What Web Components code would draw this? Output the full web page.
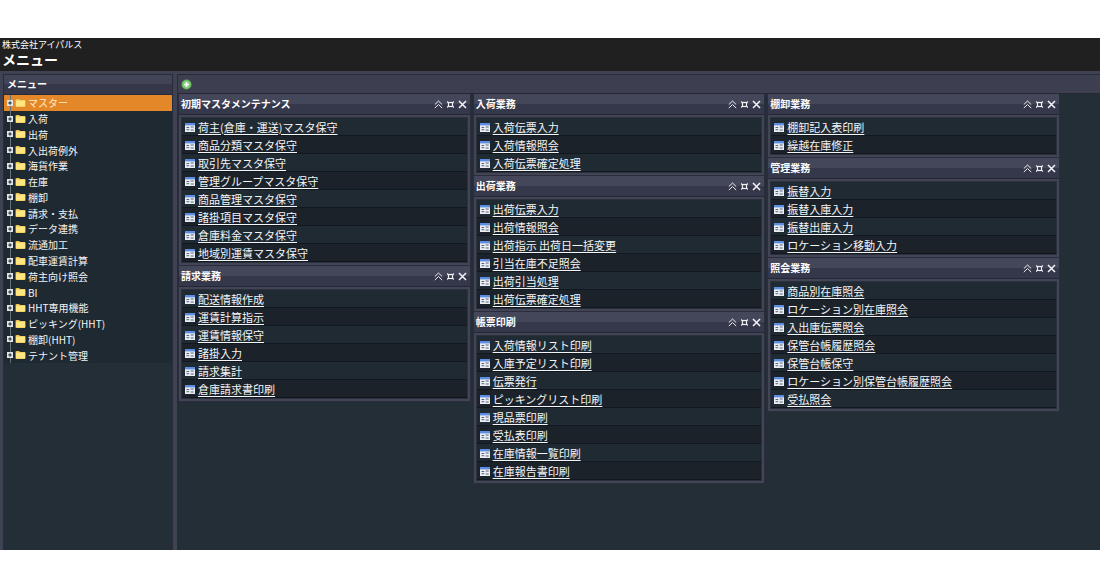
<!DOCTYPE html>
<html lang="ja">
<head>
<meta charset="utf-8">
<meta name="viewport" content="width=device-width, initial-scale=1">
<title>メニュー</title>
<style>
  html, body { height: 100%; margin: 0; }
  body {
    box-sizing: border-box;
    padding: 38px 0 36px;
    background: #fff;
    color: #fff;
    font: 11px/18px "Noto Sans CJK JP", sans-serif;
  }
</style>
</head>
<body>
<wms-app></wms-app>
<script>
const base = `*, *::before, *::after { box-sizing: border-box; }
  :host { box-sizing: border-box; }
  button { background: none; border: 0; padding: 0; margin: 0; color: inherit; font: inherit; cursor: pointer; }
  svg { display: block; }
  ul { list-style: none; margin: 0; padding: 0; }
  h1, h2, p { margin: 0; }`;

class BaseElement extends HTMLElement {
  render(css, html) {
    this.attachShadow({ mode: 'open' }).innerHTML = `<style>${base}${css}</style>${html}`;
  }
}

customElements.define('app-banner', class extends BaseElement {
  connectedCallback() {
    this.render(`
      :host { display: block; height: 33px; padding: 1px 2px; background: #202020; flex: none; }
      p { font-size: 9px; line-height: 12px; }
      h1 { font-size: 14px; line-height: 16px; font-weight: 700; }`,
      `<p>${this.getAttribute('company')}</p><h1><slot></slot></h1>`);
  }
});

customElements.define('tree-item', class extends BaseElement {
  connectedCallback() {
    this.render(`
      :host { display: block; min-height: 0; }
      .row { display: flex; align-items: center; height: 100%; padding-left: 3px; color: #f4f5f6; }
      :host([selected]) .row { background: #e48728; color: #ffeccb; }
      .label { flex: 1; text-align: left; font-size: 10px; line-height: 15px; padding-left: 2px; white-space: nowrap; }
      .toggle { flex: none; align-self: stretch; display: flex; align-items: center; width: 6px;
        background: linear-gradient(#65707a, #65707a) 3px 0 / 1px 100% no-repeat; }
      .folder { flex: none; margin-left: 2px; }`,
      `<div class="row"><button class="toggle" aria-label="展開"><svg width="6" height="6" viewBox="0 0 6 6">
        <rect width="6" height="6" fill="#dfe4e8"/><path d="M1.3 3h3.4M3 1.3v3.4" stroke="#17212b" stroke-width="1"/></svg></button>
        <svg class="folder" width="11" height="10" viewBox="0 0 11 10">
        <path d="M.5 2q0-1 1-1h2.6l1 1h4.4q1 0 1 1V8q0 1-1 1h-8q-1 0-1-1z" fill="#e9c14a"/>
        <path d="M1 2.6h9V7.6q0 .8-.8.8H1.8Q1 8.4 1 7.6z" fill="#ffe680"/></svg>
        <button class="label"><slot></slot></button></div>`);
  }
});

customElements.define('side-menu', class extends BaseElement {
  connectedCallback() {
    this.render(`
      :host { display: flex; flex-direction: column; background: #242e37; border: 1px solid #292b39; border-bottom: 0; }
      h2 { height: 20px; padding-left: 3px; font-size: 10px; line-height: 18px; flex: none;
        background: linear-gradient(#424458 0 50%, #36384a 50% 100%); border-bottom: 1px solid #262837; }
      nav { display: grid; grid-auto-rows: 1fr; height: 268px; background: #1f2932; }`,
      `<h2>メニュー</h2><nav aria-label="メニュー"><slot></slot></nav>`);
  }
});

customElements.define('menu-link', class extends BaseElement {
  connectedCallback() {
    this.render(`
      :host { display: flex; align-items: center; gap: 3px; height: 18px; padding-left: 3px;
        background: #202a33; border-bottom: 1px solid #12181f; }
      :host(:nth-child(even)) { background: #1b222a; }
      svg { flex: none; }
      a { color: #f5f6f7; font-size: 11px; line-height: 16px; white-space: nowrap; text-decoration: underline; text-underline-offset: 2px; }`,
      `<svg width="10" height="10" viewBox="0 0 10 10"><rect y="1" width="10" height="9" fill="#e9edf4"/>
        <rect y="1" width="10" height="2.4" fill="#5b8ce0"/><path d="M1.5 5.5h2.7M5.7 5h3M1.5 7.7h2.7M5.7 8h3" stroke="#4b5668" stroke-width=".9"/></svg>
        <a href="#"><slot></slot></a>`);
  }
});

customElements.define('menu-portlet', class extends BaseElement {
  connectedCallback() {
    this.render(`
      :host { display: block; background: #424555; border: 1px solid #2b2d3c; border-top: 0; }
      header { display: flex; align-items: center; gap: 4px; height: 21px; padding: 0 3px 0 2px;
        background: linear-gradient(#44465a 0 50%, #35374a 50% 100%); border-bottom: 1px solid #252736; }
      h2 { flex: 1; font-size: 10px; line-height: 18px; font-weight: 700; }
      ul { margin: 2px; border: 1px solid #2c303d; }`,
      `<header><h2>${this.getAttribute('heading')}</h2>
        <button aria-label="折りたたむ"><svg width="9" height="9" viewBox="0 0 9 9" fill="none" stroke="#f0f0f4"><path d="M.8 4.6 4.5 1l3.7 3.6M.8 8.1l3.7-3.6 3.7 3.6"/></svg></button>
        <button aria-label="最大化"><svg width="7" height="9" viewBox="0 0 7 9" fill="none" stroke="#f0f0f4"><rect x="1.5" y="2.5" width="4" height="4" stroke-width="1.2"/><path d="M0 1.4 1.4 2.8M7 1.4 5.6 2.8M0 7.6l1.4-1.4M7 7.6 5.6 6.2" stroke-width="1.2"/></svg></button>
        <button aria-label="閉じる"><svg width="9" height="9" viewBox="0 0 9 9" fill="none" stroke="#f4f4f8" stroke-width="1.5"><path d="m1 1 7 7M8 1 1 8"/></svg></button>
      </header><ul><slot></slot></ul>`);
  }
});

customElements.define('portal-area', class extends BaseElement {
  connectedCallback() {
    this.render(`
      :host { display: block; background: #242e37; border: 1px solid #292b39; border-width: 1px 0 0 1px; min-width: 0; }
      .toolbar { display: flex; align-items: center; height: 19px; padding-left: 3px; background: #3d3f50; border-bottom: 1px solid #262837; }
      .columns { display: grid; grid-template-columns: repeat(3, minmax(0, 1fr)); gap: 2px; padding-right: 40px; }`,
      `<div class="toolbar"><button aria-label="追加"><svg width="11" height="11" viewBox="0 0 11 11">
        <circle cx="5.5" cy="5.5" r="5" fill="#5fae57"/><circle cx="5.5" cy="5.5" r="4" fill="#82c978"/><path d="M5.5 3v5M3 5.5h5" stroke="#fff" stroke-width="1.6"/></svg></button></div>
        <div class="columns"><slot></slot></div>`);
  }
});

const tree = ['マスター','入荷','出荷','入出荷例外','海貨作業','在庫','棚卸','請求・支払','データ連携','流通加工','配車運賃計算','荷主向け照会','BI','HHT専用機能','ピッキング(HHT)','棚卸(HHT)','テナント管理'];
const columns = [
  [['初期マスタメンテナンス', ['荷主(倉庫・運送)マスタ保守','商品分類マスタ保守','取引先マスタ保守','管理グループマスタ保守','商品管理マスタ保守','諸掛項目マスタ保守','倉庫料金マスタ保守','地域別運賃マスタ保守']],
   ['請求業務', ['配送情報作成','運賃計算指示','運賃情報保守','諸掛入力','請求集計','倉庫請求書印刷']]],
  [['入荷業務', ['入荷伝票入力','入荷情報照会','入荷伝票確定処理']],
   ['出荷業務', ['出荷伝票入力','出荷情報照会','出荷指示 出荷日一括変更','引当在庫不足照会','出荷引当処理','出荷伝票確定処理']],
   ['帳票印刷', ['入荷情報リスト印刷','入庫予定リスト印刷','伝票発行','ピッキングリスト印刷','現品票印刷','受払表印刷','在庫情報一覧印刷','在庫報告書印刷']]],
  [['棚卸業務', ['棚卸記入表印刷','繰越在庫修正']],
   ['管理業務', ['振替入力','振替入庫入力','振替出庫入力','ロケーション移動入力']],
   ['照会業務', ['商品別在庫照会','ロケーション別在庫照会','入出庫伝票照会','保管台帳履歴照会','保管台帳保守','ロケーション別保管台帳履歴照会','受払照会']]]
];

customElements.define('wms-app', class extends BaseElement {
  connectedCallback() {
    const items = tree.map((t, i) => `<tree-item${i ? '' : ' selected'}>${t}</tree-item>`).join('');
    const cols = columns.map(c => `<div>${c.map(([h, links]) =>
      `<menu-portlet heading="${h}">${links.map(l => `<menu-link>${l}</menu-link>`).join('')}</menu-portlet>`).join('')}</div>`).join('');
    this.render(`
      :host { display: flex; flex-direction: column; min-height: 100%; background: #3f4253; overflow: hidden; }
      main { flex: 1; display: grid; grid-template-columns: 170px minmax(0, 1fr); gap: 4px; padding: 3px 0 0 3px; }`,
      `<app-banner company="株式会社アイパルス">メニュー</app-banner>
       <main><side-menu>${items}</side-menu><portal-area>${cols}</portal-area></main>`);
  }
});
</script>
</body>
</html>
